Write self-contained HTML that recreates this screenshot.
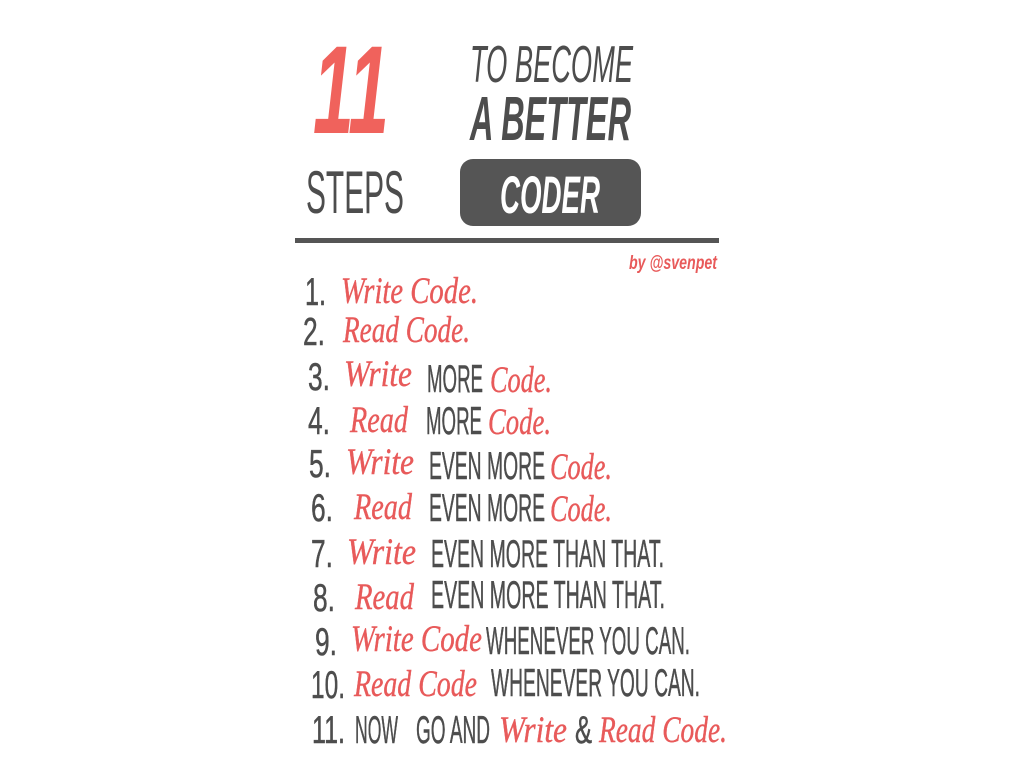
<!DOCTYPE html>
<html><head><meta charset="utf-8"><style>
html,body{margin:0;padding:0;background:#fff;width:1024px;height:768px;overflow:hidden}
svg{display:block}
.c{font-family:"Liberation Sans",sans-serif;fill:#4d4d4d}
g .c{font-size:39px;stroke:#4d4d4d;stroke-width:0.5}
.s{font-family:"Liberation Serif",serif;font-style:italic;fill:#e85a5a;font-size:37px;stroke:#e85a5a;stroke-width:0.4}
</style></head><body>
<svg width="1024" height="768" viewBox="0 0 1024 768" xmlns="http://www.w3.org/2000/svg">
<text x="313" y="133" class="c" style="fill:#f0625c;font-weight:bold;font-style:italic" font-size="125" textLength="76" lengthAdjust="spacingAndGlyphs">11</text>
<text x="470" y="82" class="c" style="font-style:italic" font-size="52" textLength="163" lengthAdjust="spacingAndGlyphs">TO BECOME</text>
<text x="470" y="140" class="c" style="font-style:italic;font-weight:bold" font-size="62" textLength="161" lengthAdjust="spacingAndGlyphs">A BETTER</text>
<text x="306" y="213" class="c" font-size="60" textLength="98" lengthAdjust="spacingAndGlyphs">STEPS</text>
<rect x="460" y="159" width="181" height="67" rx="13" fill="#555"/>
<text x="500" y="213" class="c" style="fill:#fff;font-weight:bold;font-style:italic" font-size="53" textLength="100" lengthAdjust="spacingAndGlyphs">CODER</text>
<rect x="295" y="238" width="424" height="5" fill="#555"/>
<text x="629" y="269" class="c" style="fill:#e85a5a;font-weight:bold;font-style:italic" font-size="19" textLength="88" lengthAdjust="spacingAndGlyphs">by @svenpet</text>

<g>
<text x="305" y="305" class="c" textLength="21" lengthAdjust="spacingAndGlyphs">1.</text>
<text x="341" y="303" class="s" textLength="137" lengthAdjust="spacingAndGlyphs">Write Code.</text>

<text x="303" y="345" class="c" textLength="22" lengthAdjust="spacingAndGlyphs">2.</text>
<text x="343" y="342" class="s" textLength="127" lengthAdjust="spacingAndGlyphs">Read Code.</text>

<text x="308" y="390" class="c" textLength="22" lengthAdjust="spacingAndGlyphs">3.</text>
<text x="344" y="386" class="s" textLength="68" lengthAdjust="spacingAndGlyphs">Write</text>
<text x="427" y="392" class="c" textLength="56" lengthAdjust="spacingAndGlyphs">MORE</text>
<text x="490" y="392" class="s" textLength="62" lengthAdjust="spacingAndGlyphs">Code.</text>

<text x="308" y="434" class="c" textLength="22" lengthAdjust="spacingAndGlyphs">4.</text>
<text x="350" y="432" class="s" textLength="58" lengthAdjust="spacingAndGlyphs">Read</text>
<text x="426" y="434" class="c" textLength="56" lengthAdjust="spacingAndGlyphs">MORE</text>
<text x="488" y="434" class="s" textLength="63" lengthAdjust="spacingAndGlyphs">Code.</text>

<text x="309" y="477" class="c" textLength="22" lengthAdjust="spacingAndGlyphs">5.</text>
<text x="346" y="474" class="s" textLength="68" lengthAdjust="spacingAndGlyphs">Write</text>
<text x="429" y="479" class="c" textLength="116" lengthAdjust="spacingAndGlyphs">EVEN MORE</text>
<text x="550" y="479" class="s" textLength="62" lengthAdjust="spacingAndGlyphs">Code.</text>

<text x="311" y="521" class="c" textLength="22" lengthAdjust="spacingAndGlyphs">6.</text>
<text x="354" y="519" class="s" textLength="58" lengthAdjust="spacingAndGlyphs">Read</text>
<text x="429" y="521" class="c" textLength="116" lengthAdjust="spacingAndGlyphs">EVEN MORE</text>
<text x="550" y="521" class="s" textLength="62" lengthAdjust="spacingAndGlyphs">Code.</text>

<text x="311" y="567" class="c" textLength="22" lengthAdjust="spacingAndGlyphs">7.</text>
<text x="347" y="564" class="s" textLength="69" lengthAdjust="spacingAndGlyphs">Write</text>
<text x="431" y="567" class="c" textLength="233" lengthAdjust="spacingAndGlyphs">EVEN MORE THAN THAT.</text>

<text x="313" y="611" class="c" textLength="22" lengthAdjust="spacingAndGlyphs">8.</text>
<text x="355" y="609" class="s" textLength="59" lengthAdjust="spacingAndGlyphs">Read</text>
<text x="431" y="608" class="c" textLength="234" lengthAdjust="spacingAndGlyphs">EVEN MORE THAN THAT.</text>

<text x="315" y="655" class="c" textLength="22" lengthAdjust="spacingAndGlyphs">9.</text>
<text x="351" y="651" class="s" textLength="131" lengthAdjust="spacingAndGlyphs">Write Code</text>
<text x="486" y="654" class="c" textLength="204" lengthAdjust="spacingAndGlyphs">WHENEVER YOU CAN.</text>

<text x="311" y="698" class="c" textLength="34" lengthAdjust="spacingAndGlyphs">10.</text>
<text x="354" y="696" class="s" textLength="123" lengthAdjust="spacingAndGlyphs">Read Code</text>
<text x="491" y="696" class="c" textLength="209" lengthAdjust="spacingAndGlyphs">WHENEVER YOU CAN.</text>

<text x="312" y="743" class="c" textLength="33" lengthAdjust="spacingAndGlyphs">11.</text>
<text x="355" y="743" class="c" textLength="43" lengthAdjust="spacingAndGlyphs">NOW</text>
<text x="416" y="743" class="c" textLength="74" lengthAdjust="spacingAndGlyphs">GO AND</text>
<text x="499" y="742" class="s" textLength="68" lengthAdjust="spacingAndGlyphs">Write</text>
<text x="575" y="743" class="c" textLength="17" lengthAdjust="spacingAndGlyphs">&amp;</text>
<text x="599" y="742" class="s" textLength="128" lengthAdjust="spacingAndGlyphs">Read Code.</text>
</g>
</svg>
</body></html>
